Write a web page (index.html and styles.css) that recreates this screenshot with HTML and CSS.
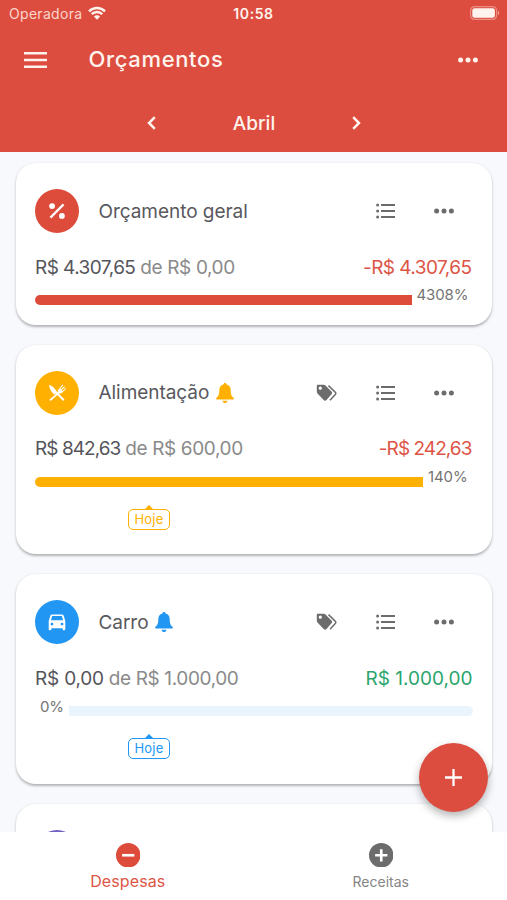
FILE: index.html
```html
<!DOCTYPE html>
<html lang="pt-BR">
<head>
<meta charset="utf-8">
<title>Orçamentos</title>
<link rel="stylesheet" href="styles.css">
</head>
<body>
<svg class="defs" aria-hidden="true">
  <symbol id="dots" viewBox="0 0 20 6"><circle cx="2.6" cy="3" r="2.5"/><circle cx="10" cy="3" r="2.5"/><circle cx="17.4" cy="3" r="2.5"/></symbol>
  <symbol id="list" viewBox="0 0 19 16"><circle cx="1.6" cy="2" r="1.5"/><circle cx="1.6" cy="8" r="1.5"/><circle cx="1.6" cy="14" r="1.5"/><path d="M5 2h14M5 8h14M5 14h14" stroke="currentColor" stroke-width="1.8"/></symbol>
  <symbol id="tags" viewBox="0 0 22 18"><path fill-rule="evenodd" d="M2 .7h5.800c.7 0 1.200.2 1.700.7l6 6c.9.9.9 2 0 2.900l-5 5.700c-.8.9-1.900.9-2.800 0l-6-6.200c-.6-.6-.9-1.200-.9-2V2C.8 1.200 1.200.7 2 .7zM4.300 2.600a1.600 1.600 0 1 0 0 3.200 1.600 1.600 0 0 0 0-3.200z"/><path d="M12.500 1.600l7 6.900c.5.600.5 1.100 0 1.700l-5.500 6" fill="none" stroke="currentColor" stroke-width="1.500"/></symbol>
  <symbol id="bell" viewBox="0 0 18 20"><path d="M9 0c.9 0 1.600.6 1.600 1.500 2.800.7 4.100 3 4.100 5.800 0 4.700 1.100 6.200 2.800 7.500.8.800.4 1.700-.6 1.700H1.100c-1 0-1.400-.9-.6-1.700C2.200 13.500 3.300 12 3.300 7.300c0-2.800 1.300-5.100 4.100-5.800C7.400.6 8.100 0 9 0zM6.500 17.700h5C11.200 19.100 10.200 20 9 20s-2.200-.9-2.500-2.300z"/></symbol>
</svg>
<div class="app">
  <header class="top">
    <div class="status">
      <div class="carrier"><span>Operadora</span>
        <svg class="wifi" viewBox="0 0 18 14"><path d="M1 5.300a11.400 11.400 0 0 1 16 0M3.700 8.200a7.500 7.500 0 0 1 10.600 0" fill="none" stroke="currentColor" stroke-width="2.400"/><path d="M5.900 10.500a4.400 4.400 0 0 1 6.200 0L9 13.700z"/></svg>
      </div>
      <span class="clock">10:58</span>
      <svg class="battery" viewBox="0 0 30 14"><rect x=".6" y=".6" width="26" height="12.800" rx="4" fill="none" stroke="currentColor" stroke-opacity=".4" stroke-width="1.200"/><rect x="2.300" y="2.300" width="22.600" height="9.400" rx="2.300"/><path d="M28 4.800c1.600.7 1.600 3.700 0 4.400z" opacity=".5"/></svg>
    </div>
    <div class="toolbar">
      <svg class="menu" viewBox="0 0 23 16"><path d="M0 1.300h23M0 8h23M0 14.700h23" stroke="currentColor" stroke-width="2.500"/></svg>
      <h1>Orçamentos</h1>
      <svg class="more"><use href="#dots"/></svg>
    </div>
    <nav class="month">
      <svg class="chev" viewBox="0 0 9 14"><path d="M7.800 1.100L2 7l5.800 5.900" fill="none" stroke="currentColor" stroke-width="2.500"/></svg>
      <span>Abril</span>
      <svg class="chev" viewBox="0 0 9 14"><path d="M1.200 1.100L7 7l-5.800 5.900" fill="none" stroke="currentColor" stroke-width="2.500"/></svg>
    </nav>
  </header>

  <main class="cards">
    <section class="card short red">
      <div class="head">
        <div class="badge"><svg viewBox="0 0 16 16"><circle cx="3.100" cy="3.100" r="2.900"/><circle cx="12.900" cy="12.900" r="2.900"/><path d="M1.400 14.600L14.600 1.400" stroke="currentColor" stroke-width="2.200"/></svg></div>
        <h2>Orçamento geral</h2>
        <div class="actions"><svg class="list"><use href="#list"/></svg><svg class="more"><use href="#dots"/></svg></div>
      </div>
      <div class="amounts"><p><b class="s2">R$ 4.307,65</b> de R$ 0,00</p><p class="neg s2">-R$ 4.307,65</p></div>
      <div class="progress"><i class="bar over1"></i><span>4308%</span></div>
    </section>

    <section class="card yellow">
      <div class="head">
        <div class="badge"><svg viewBox="0 0 18 18"><path d="M1.200.7c3.500 1.200 5.800 3.900 7.500 6.800l7.800 8.100-1.300 1.300-7.400-7.300-1.300.9C3.600 8.200 1.100 4.900 1.200.7z"/><path d="M1.300 15.700l8.600-7.400c-.4-1.500.2-2.600 1.200-3.600L14.500.6l.7.600-2.900 3.700.7.700L16.300 2.200l.7.700-3.400 3.300.7.700L17.800 4l.6.700-4 3.800c-1 .9-2 1.300-3.400 1L2.700 17.100z"/></svg></div>
        <h2>Alimentação</h2><svg class="bell"><use href="#bell"/></svg>
        <div class="actions"><svg class="tags"><use href="#tags"/></svg><svg class="list"><use href="#list"/></svg><svg class="more"><use href="#dots"/></svg></div>
      </div>
      <div class="amounts"><p><b class="s3">R$ 842,63</b> de R$ 600,00</p><p class="neg s3">-R$ 242,63</p></div>
      <div class="progress"><i class="bar over2"></i><span>140%</span></div>
      <div class="today">Hoje</div>
    </section>

    <section class="card blue">
      <div class="head">
        <div class="badge"><svg viewBox="0 0 18 18"><path fill-rule="evenodd" d="M4 1.500h10c.8 0 1.400.4 1.700 1.200L17.300 8v8.300c0 .5-.4.900-.9.900h-.9c-.5 0-.9-.4-.9-.9v-1H3.400v1c0 .5-.4.900-.9.900h-.9c-.5 0-.9-.4-.9-.9V8l1.600-5.300C2.600 1.900 3.200 1.500 4 1.500zM4.200 3L2.900 7.300h12.200L13.800 3zM4 9.700a1.400 1.400 0 1 0 0 2.800 1.400 1.400 0 0 0 0-2.800zm10 0a1.400 1.400 0 1 0 0 2.800 1.400 1.400 0 0 0 0-2.800z"/></svg></div>
        <h2>Carro</h2><svg class="bell"><use href="#bell"/></svg>
        <div class="actions"><svg class="tags"><use href="#tags"/></svg><svg class="list"><use href="#list"/></svg><svg class="more"><use href="#dots"/></svg></div>
      </div>
      <div class="amounts"><p><b class="s1">R$ 0,00</b> de R$ 1.000,00</p><p class="pos">R$ 1.000,00</p></div>
      <div class="progress"><span class="zero">0%</span><i class="bar empty"></i></div>
      <div class="today">Hoje</div>
    </section>

    <section class="card purple"><div class="head"><div class="badge"></div></div></section>
  </main>

  <button class="fab" aria-label="+"><svg viewBox="0 0 18 18"><path d="M9 0v18M0 9h18" stroke="currentColor" stroke-width="2.400"/></svg></button>

  <footer class="tabs">
    <div class="tab active"><svg viewBox="0 0 24 24"><circle cx="12" cy="12" r="12"/><path d="M6 12h12" stroke="#fff" stroke-width="2.600"/></svg><span>Despesas</span></div>
    <div class="tab"><svg viewBox="0 0 24 24"><circle cx="12" cy="12" r="12"/><path d="M6 12h12M12 6v12" stroke="#fff" stroke-width="2.600"/></svg><span>Receitas</span></div>
  </footer>
</div>
</body>
</html>
```
FILE: styles.css
```css
* { box-sizing: border-box; margin: 0; padding: 0; }
body { font-family: Inter, "Liberation Sans", sans-serif; background: #f8f9fd; color: #58585d; }
svg { fill: currentColor; display: block; flex: none; }
.defs { position: absolute; width: 0; height: 0; }
.app { position: relative; width: 507px; height: 900px; overflow: hidden; display: flex; flex-direction: column; }

.top { height: 152px; flex: none; background: #dd4d3f; color: #fff3ee; }
.status { height: 27px; padding: 0 7px 0 9px; display: grid; grid-template-columns: 1fr auto 1fr; align-items: center; }
.carrier { display: flex; align-items: center; gap: 6px; font-size: 14px; }
.carrier span { letter-spacing: .3px; color: #fbd5cc; }
.wifi { width: 18px; height: 14px; margin-top: -1px; }
.clock { font-size: 14px; font-weight: 600; letter-spacing: .6px; margin-right: 2px; }
.battery { width: 30px; height: 14px; justify-self: end; margin-top: -1px; }
.toolbar { height: 65px; padding: 0 29px 0 23.500px; display: flex; align-items: center; }
.menu { width: 23px; height: 16px; }
h1 { font-size: 22px; font-weight: 500; margin: -2px 0 0 42px; flex: 1; letter-spacing: .65px; }
.more { width: 20px; height: 6px; }
.month { height: 62px; display: flex; justify-content: space-between; align-items: center; padding: 0 145.500px 0 146.500px; font-size: 19px; font-weight: 500; }
.chev { width: 9px; height: 14px; }

.cards { flex: 1; min-height: 0; overflow: hidden; padding: 10.500px 15px 0 15.500px; display: flex; flex-direction: column; gap: 20px; }
.card { flex: none; height: 209.500px; background: #fff; border-radius: 20px; padding: 26px 19.500px 0; box-shadow: 0 1.500px 2.500px rgba(0,0,0,.28); }
.short { height: 162px; padding-top: 26.500px; }
.head { display: flex; align-items: center; height: 44px; }
.badge { width: 44px; height: 44px; border-radius: 50%; color: #fff; background: var(--c); display: grid; place-items: center; flex: none; }
.badge svg { width: 18px; height: 18px; }
.red .badge svg { width: 16px; height: 16px; }
.red { --c: #dd4b3b; }
.yellow { --c: #ffb000; }
.blue { --c: #2196f3; }
.purple { --c: #7160c4; }
h2 { font-size: 19px; font-weight: 400; margin-left: 19.500px; white-space: nowrap; letter-spacing: -.05px; }
.bell { width: 18px; height: 20px; margin-left: 7px; color: var(--c); }
.actions { margin-left: auto; padding-right: 19px; display: flex; align-items: center; gap: 39px; color: #6c6c6c; }
.list { width: 19px; height: 16px; }
.tags { width: 22px; height: 18px; margin-right: -1px; }

.amounts { display: flex; justify-content: space-between; align-items: center; height: 24px; margin-top: 22px; font-size: 19px; white-space: nowrap; }
.amounts p { color: #8a8a8a; letter-spacing: -.38px; }
.amounts b { font-weight: 400; color: #55555b; }
.amounts .s1 { letter-spacing: -.2px; }
.amounts .s2 { letter-spacing: -.55px; }
.amounts .s3 { letter-spacing: -.95px; }
.amounts .neg { color: #dd5546; padding-right: 1px; }
.amounts .pos { color: #2ba56d; letter-spacing: 0; }
.progress { height: 10px; margin-top: 16px; display: flex; color: #747474; font-size: 15px; }
.progress span { line-height: 20px; height: 20px; margin: -10px 0 0 5px; letter-spacing: -.1px; }
.bar { height: 10px; background: var(--c); border-radius: 5px 0 0 5px; }
.over1 { width: 376.500px; }
.over2 { width: 388px; }
.empty { flex: 1; background: #e9f4fd; border-radius: 0 5px 5px 0; }
.progress .zero { width: 29px; margin-left: 5px; margin-top: -9px; }
.today { position: relative; width: 42px; height: 21px; margin: 22px 0 0 93px; border: 1.500px solid var(--c); border-radius: 5px; color: var(--c); font-size: 13px; line-height: 18px; text-align: center; letter-spacing: .2px; }
.today::before { content: ""; position: absolute; left: 50%; top: -5px; transform: translateX(-50%); border: 4px solid transparent; border-top: 0; border-bottom-color: var(--c); }

.fab { position: absolute; right: 19px; bottom: 88px; width: 69px; height: 69px; border: 0; border-radius: 50%; background: #dd4d3f; color: #fff; display: grid; place-items: center; box-shadow: 0 4px 8px rgba(0,0,0,.3); }
.fab svg { width: 17px; height: 17px; }
.tabs { height: 68.500px; flex: none; background: #fff; display: grid; grid-template-columns: 1fr 1fr; }
.tab { display: flex; flex-direction: column; align-items: center; padding-top: 11px; color: #6c6c6c; font-size: 14px; }
.tab:first-child { padding-left: 2px; }
.tab:last-child { padding-left: 1px; }
.tab svg { width: 24.500px; height: 24.500px; }
.tab span { margin-top: 5px; line-height: 20px; color: #858585; }
.tab.active { color: #dd4b3b; }
.tab.active span { color: #dd5546; font-size: 16px; margin-top: 4px; letter-spacing: .1px; }
```
